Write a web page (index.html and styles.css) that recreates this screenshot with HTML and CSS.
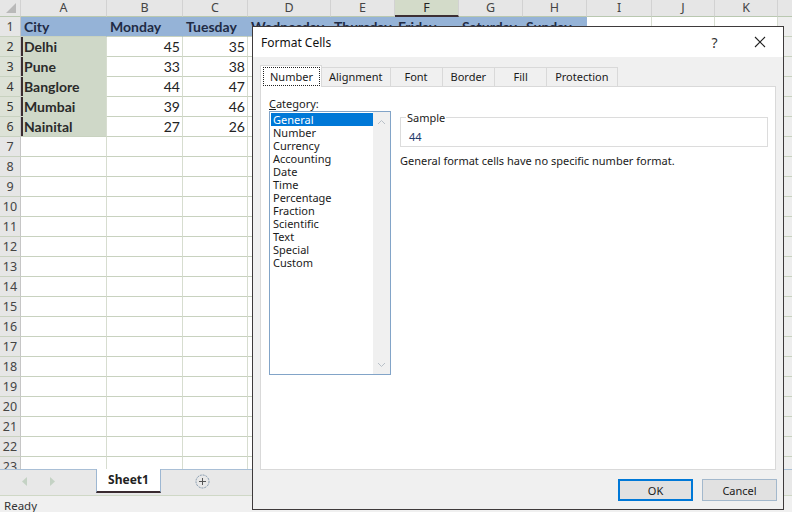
FILE: index.html
```html
<!DOCTYPE html>
<html lang="en">
<head>
<meta charset="utf-8">
<title>Format Cells</title>
<link rel="stylesheet" href="styles.css">
</head>
<body>
<div class="app">
  <div class="sheet">
    <div class="row cols">
      <span class="corner"><svg width="12" height="12" viewBox="0 0 12 12"><polygon points="11,1 11,11 1,11" fill="#b9b9b9"/></svg></span>
      <span>A</span><span>B</span><span>C</span><span>D</span><span>E</span><span class="csel">F</span><span>G</span><span>H</span><span>I</span><span>J</span><span>K</span><span>L</span>
    </div>
    <div class="row"><span class="rh">1</span><span class="hd">City</span><span class="hd">Monday</span><span class="hd">Tuesday</span><span class="hd">Wednesday</span><span class="hd">Thursday</span><span class="hd">Friday</span><span class="hd">Saturday</span><span class="hd">Sunday</span><span></span><span></span><span></span><span class="side"></span></div>
    <div class="row"><span class="rh on">2</span><span class="sel">Delhi</span><span class="num">45</span><span class="num">35</span><span></span><span></span><span></span><span></span><span></span><span></span><span></span><span></span><span class="side"></span></div>
    <div class="row"><span class="rh on">3</span><span class="sel">Pune</span><span class="num">33</span><span class="num">38</span><span></span><span></span><span></span><span></span><span></span><span></span><span></span><span></span><span class="side"></span></div>
    <div class="row"><span class="rh on">4</span><span class="sel">Banglore</span><span class="num">44</span><span class="num">47</span><span></span><span></span><span></span><span></span><span></span><span></span><span></span><span></span><span class="side"></span></div>
    <div class="row"><span class="rh on">5</span><span class="sel">Mumbai</span><span class="num">39</span><span class="num">46</span><span></span><span></span><span></span><span></span><span></span><span></span><span></span><span></span><span class="side"></span></div>
    <div class="row"><span class="rh on">6</span><span class="sel last">Nainital</span><span class="num">27</span><span class="num">26</span><span></span><span></span><span></span><span></span><span></span><span></span><span></span><span></span><span class="side"></span></div>
    <div class="row"><span class="rh">7</span><span></span><span></span><span></span><span></span><span></span><span></span><span></span><span></span><span></span><span></span><span></span><span class="side"></span></div>
    <div class="row"><span class="rh">8</span><span></span><span></span><span></span><span></span><span></span><span></span><span></span><span></span><span></span><span></span><span></span><span class="side"></span></div>
    <div class="row"><span class="rh">9</span><span></span><span></span><span></span><span></span><span></span><span></span><span></span><span></span><span></span><span></span><span></span><span class="side"></span></div>
    <div class="row"><span class="rh">10</span><span></span><span></span><span></span><span></span><span></span><span></span><span></span><span></span><span></span><span></span><span></span><span class="side"></span></div>
    <div class="row"><span class="rh">11</span><span></span><span></span><span></span><span></span><span></span><span></span><span></span><span></span><span></span><span></span><span></span><span class="side"></span></div>
    <div class="row"><span class="rh">12</span><span></span><span></span><span></span><span></span><span></span><span></span><span></span><span></span><span></span><span></span><span></span><span class="side"></span></div>
    <div class="row"><span class="rh">13</span><span></span><span></span><span></span><span></span><span></span><span></span><span></span><span></span><span></span><span></span><span></span><span class="side"></span></div>
    <div class="row"><span class="rh">14</span><span></span><span></span><span></span><span></span><span></span><span></span><span></span><span></span><span></span><span></span><span></span><span class="side"></span></div>
    <div class="row"><span class="rh">15</span><span></span><span></span><span></span><span></span><span></span><span></span><span></span><span></span><span></span><span></span><span></span><span class="side"></span></div>
    <div class="row"><span class="rh">16</span><span></span><span></span><span></span><span></span><span></span><span></span><span></span><span></span><span></span><span></span><span></span><span class="side"></span></div>
    <div class="row"><span class="rh">17</span><span></span><span></span><span></span><span></span><span></span><span></span><span></span><span></span><span></span><span></span><span></span><span class="side"></span></div>
    <div class="row"><span class="rh">18</span><span></span><span></span><span></span><span></span><span></span><span></span><span></span><span></span><span></span><span></span><span></span><span class="side"></span></div>
    <div class="row"><span class="rh">19</span><span></span><span></span><span></span><span></span><span></span><span></span><span></span><span></span><span></span><span></span><span></span><span class="side"></span></div>
    <div class="row"><span class="rh">20</span><span></span><span></span><span></span><span></span><span></span><span></span><span></span><span></span><span></span><span></span><span></span><span class="side"></span></div>
    <div class="row"><span class="rh">21</span><span></span><span></span><span></span><span></span><span></span><span></span><span></span><span></span><span></span><span></span><span></span><span class="side"></span></div>
    <div class="row"><span class="rh">22</span><span></span><span></span><span></span><span></span><span></span><span></span><span></span><span></span><span></span><span></span><span></span><span class="side"></span></div>
    <div class="row"><span class="rh">23</span><span></span><span></span><span></span><span></span><span></span><span></span><span></span><span></span><span></span><span></span><span></span><span class="side"></span></div>
  </div>

  <div class="tabbar">
    <div class="nav">
      <svg width="6" height="9" viewBox="0 0 6 9"><polygon points="5,0 5,9 0,4.5" fill="#c4d2c4"/></svg>
      <svg width="6" height="9" viewBox="0 0 6 9"><polygon points="0,0 0,9 5,4.5" fill="#c4d2c4"/></svg>
    </div>
    <div class="sheettab">Sheet1</div>
    <div class="addsheet"><svg width="15" height="15" viewBox="0 0 15 15"><circle cx="7.5" cy="7.5" r="6.5" fill="none" stroke="#7f95ab" stroke-width="1" stroke-dasharray="2 1"/><path d="M7.5 4v7M4 7.5h7" stroke="#555" stroke-width="1"/></svg></div>
  </div>

  <div class="statusbar">Ready</div>
</div>

<div class="dialog">
  <div class="titlebar">
    <span class="title">Format Cells</span>
    <span class="tb-btn help">?</span>
    <span class="tb-btn close"><svg width="12" height="12" viewBox="0 0 12 12"><path d="M1 1L11 11M11 1L1 11" stroke="#222" stroke-width="1.1"/></svg></span>
  </div>
  <div class="dlg-body">
    <div class="tabs">
      <span class="tab active"><span class="focus">Number</span></span>
      <span class="tab t-align">Alignment</span>
      <span class="tab">Font</span>
      <span class="tab">Border</span>
      <span class="tab">Fill</span>
      <span class="tab">Protection</span>
    </div>
    <div class="panel">
      <div class="left">
        <div class="label"><u>C</u>ategory:</div>
        <div class="listbox">
          <ul class="items">
            <li class="selected">General</li>
            <li>Number</li>
            <li>Currency</li>
            <li>Accounting</li>
            <li>Date</li>
            <li>Time</li>
            <li>Percentage</li>
            <li>Fraction</li>
            <li>Scientific</li>
            <li>Text</li>
            <li>Special</li>
            <li>Custom</li>
          </ul>
          <div class="scroll">
            <svg width="9" height="6" viewBox="0 0 9 6"><polyline points="1,5 4.5,1.5 8,5" fill="none" stroke="#b8c0c8" stroke-width="1"/></svg>
            <svg width="9" height="6" viewBox="0 0 9 6"><polyline points="1,1 4.5,4.5 8,1" fill="none" stroke="#b8c0c8" stroke-width="1"/></svg>
          </div>
        </div>
      </div>
      <div class="right">
        <fieldset class="sample">
          <legend>Sample</legend>
          <div class="value">44</div>
        </fieldset>
        <p class="desc">General format cells have no specific number format.</p>
      </div>
    </div>
    <div class="buttons">
      <button class="btn default">OK</button>
      <button class="btn">Cancel</button>
    </div>
  </div>
</div>
</body>
</html>
```

FILE: styles.css
```css
html, body {
  margin: 0;
  padding: 0;
  width: 792px;
  height: 512px;
  overflow: hidden;
  background: #ffffff;
}

.app {
  display: flex;
  flex-direction: column;
  width: 792px;
  height: 512px;
}

/* ---------- Spreadsheet ---------- */
.sheet {
  flex: none;
  height: 469px;
  overflow: hidden;
  background: #ffffff;
  font-family: Lato, "Liberation Sans", sans-serif;
  font-size: 14px;
  color: #222222;
}

.row {
  display: grid;
  grid-template-columns: 21px 86px 76px 65px 83px 64px 64px 64px 64px 65px 63px 63px 63px;
  height: 20px;
}

.row > span {
  box-sizing: border-box;
  border-right: 1px solid #d7ddd0;
  border-bottom: 1px solid #c8d2bf;
  line-height: 19px;
  padding: 0 3px;
  white-space: nowrap;
  overflow: hidden;
}

.row.cols {
  height: 17px;
}

.row.cols > span {
  background: #e6e6e6;
  border-right: 1px solid #d2d2d2;
  border-bottom: 1px solid #b9c8b0;
  line-height: 16px;
  text-align: center;
  font-family: "Noto Sans", sans-serif;
  font-size: 12.5px;
  color: #444444;
}

.row.cols > .corner {
  padding: 2px 0 0 5px;
  text-align: left;
  line-height: 0;
}

.row.cols > .csel {
  background: #d3dbc9;
  border-bottom: 2px solid #3d3034;
  color: #222222;
}

.row > .rh {
  background: #e6e6e6;
  border-right: 1px solid #c6c6c6;
  padding: 0;
  text-align: center;
  font-family: "Noto Sans", sans-serif;
  font-size: 12.5px;
  color: #444444;
}

.row > .rh.on {
  background: #dde2d7;
  color: #333333;
}

.row > .hd {
  background: #95b3d7;
  border-right-color: transparent;
  font-weight: bold;
  color: #1f2b45;
  overflow: visible;
}

.row > .sel {
  background: #cfd8c8;
  box-shadow: inset 2px 0 0 #3a2d31;
  border-bottom-color: transparent;
  font-weight: bold;
  color: #2a2a2a;
}

.row > .sel.last {
  border-bottom-color: #c8d2bf;
}

.row > .num {
  text-align: right;
  padding-right: 2px;
}

.row > .side {
  background: #eeeeee;
}

/* ---------- Sheet tabs ---------- */
.tabbar {
  flex: none;
  box-sizing: border-box;
  height: 26px;
  display: flex;
  align-items: stretch;
  background: #e8e8e8;
  border-top: 1px solid #a9bfd6;
  padding-bottom: 2px;
}

.nav {
  width: 96px;
  display: flex;
  align-items: center;
  gap: 22px;
  padding-left: 22px;
  box-sizing: border-box;
}

.sheettab {
  box-sizing: border-box;
  width: 65px;
  margin-top: -1px;
  background: #ffffff;
  border-left: 1px solid #9db7d2;
  border-right: 1px solid #9db7d2;
  border-bottom: 2px solid #3a2b30;
  text-align: center;
  font-family: "Noto Sans", sans-serif;
  font-weight: bold;
  font-size: 12px;
  line-height: 22px;
  color: #222222;
}

.addsheet {
  display: flex;
  align-items: center;
  margin-left: 34px;
}

.statusbar {
  flex: 1;
  box-sizing: border-box;
  background: #f0f0f0;
  border-top: 1px solid #cfd8c6;
  padding: 2px 0 0 4px;
  font-family: "Noto Sans", sans-serif;
  font-size: 11.5px;
  line-height: 15px;
  color: #333333;
}

/* ---------- Dialog ---------- */
.dialog {
  position: absolute;
  left: 252px;
  top: 26px;
  width: 532px;
  height: 484px;
  box-sizing: border-box;
  border: 1px solid #3e3a3b;
  background: #f0f0f0;
  display: flex;
  flex-direction: column;
  font-family: "Noto Sans", sans-serif;
  font-size: 11px;
  color: #1a1a1a;
}

.titlebar {
  flex: none;
  height: 30px;
  background: #ffffff;
  display: flex;
  align-items: center;
  padding-left: 8px;
}

.title {
  flex: 1;
  font-size: 12px;
  color: #111111;
}

.tb-btn {
  width: 45px;
  height: 30px;
  display: flex;
  align-items: center;
  justify-content: center;
}

.help {
  font-size: 14px;
  color: #333333;
}

.close {
  width: 46px;
}

.dlg-body {
  flex: 1;
  display: flex;
  flex-direction: column;
  padding: 8px 7px 0 7px;
}

.tabs {
  display: flex;
  align-items: flex-end;
  height: 21px;
}

.tab {
  box-sizing: border-box;
  height: 19px;
  min-width: 53px;
  padding: 0 8px;
  margin-right: -1px;
  border: 1px solid #d9d9d9;
  border-bottom: none;
  background: #f0f0f0;
  text-align: center;
  line-height: 18px;
  color: #1a1a1a;
}

.tab.t-align {
  padding: 0 7px;
}

.tab.active {
  position: relative;
  z-index: 1;
  height: 22px;
  margin-bottom: -1px;
  padding: 1px 1px 0 2px;
  background: #ffffff;
  min-width: 0;
}

.focus {
  display: block;
  border: 1px dotted #222222;
  padding: 0 6px;
  line-height: 17px;
}

.panel {
  box-sizing: border-box;
  height: 384px;
  display: flex;
  gap: 9px;
  padding: 9px 7px 0 8px;
  background: #ffffff;
  border: 1px solid #d9d9d9;
}

.left {
  width: 122px;
  flex: none;
}

.label {
  line-height: 15px;
  height: 15px;
}

.listbox {
  box-sizing: border-box;
  height: 264px;
  display: flex;
  border: 1px solid #82a4c8;
}

.items {
  list-style: none;
  margin: 0;
  padding: 1px 0 0 1px;
  flex: 1;
}

.items li {
  height: 13px;
  line-height: 13px;
  padding-left: 2px;
  white-space: nowrap;
}

.items li.selected {
  background: #0078d7;
  color: #ffffff;
}

.scroll {
  width: 17px;
  background: #f0f0f0;
  display: flex;
  flex-direction: column;
  justify-content: space-between;
  align-items: center;
  padding: 7px 0 6px;
}

.right {
  flex: 1;
  padding-top: 14px;
}

.sample {
  margin: 0;
  padding: 4px 8px 2px;
  border: 1px solid #dcdcdc;
  min-inline-size: 0;
}

.sample legend {
  padding: 0 1px;
  margin-left: -3px;
  line-height: 15px;
}

.value {
  line-height: 15px;
  color: #1f3b6b;
}

.desc {
  margin: 6px 0 0;
  line-height: 15px;
}

.buttons {
  display: flex;
  justify-content: flex-end;
  gap: 9px;
  margin-top: 9px;
  margin-right: -1px;
}

.btn {
  box-sizing: border-box;
  width: 75px;
  height: 22px;
  padding: 0;
  background: #e1e1e1;
  border: 1px solid #a3b8cc;
  font-family: "Noto Sans", sans-serif;
  font-size: 11px;
  color: #1a1a1a;
}

.btn.default {
  border: 2px solid #0078d7;
}
```
